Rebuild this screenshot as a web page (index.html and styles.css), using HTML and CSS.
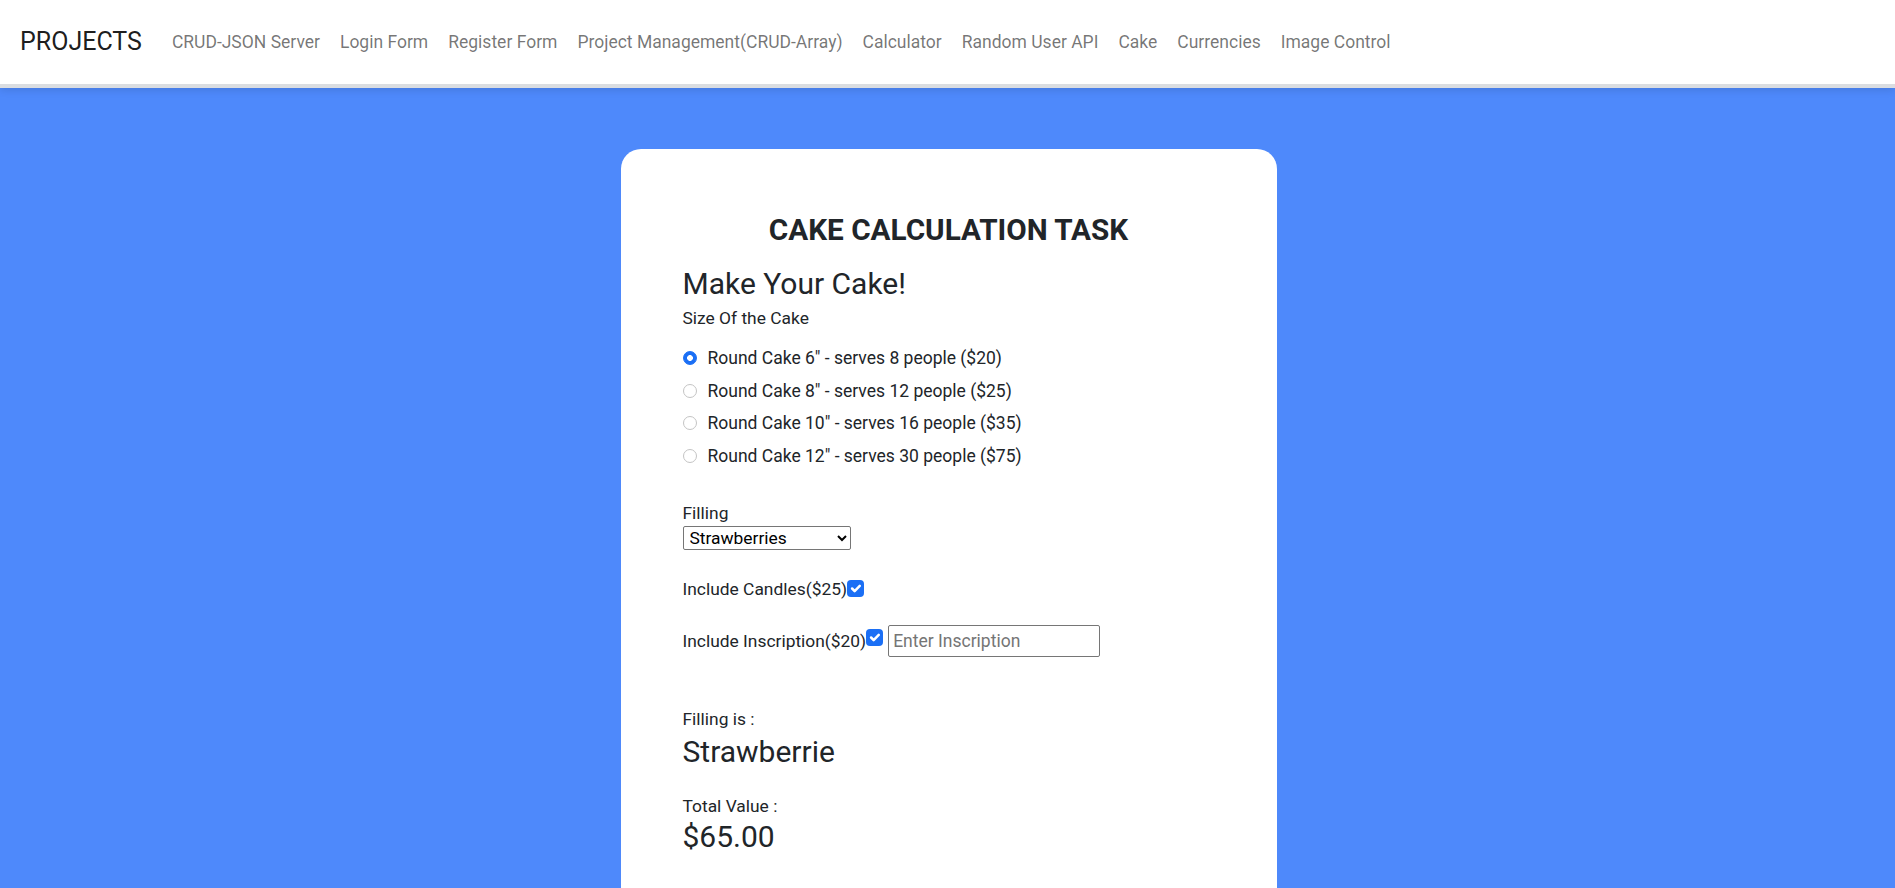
FILE: index.html
```html
<!DOCTYPE html>
<html lang="en">
<head>
<meta charset="utf-8">
<title>Cake Calculation Task</title>
<link rel="stylesheet" href="styles.css">
</head>
<body>
<nav class="navbar">
  <a class="brand" href="#">PROJECTS</a>
  <ul class="nav-links">
    <li><a href="#">CRUD-JSON Server</a></li>
    <li><a href="#">Login Form</a></li>
    <li><a href="#">Register Form</a></li>
    <li><a href="#">Project Management(CRUD-Array)</a></li>
    <li><a href="#">Calculator</a></li>
    <li><a href="#">Random User API</a></li>
    <li><a href="#">Cake</a></li>
    <li><a href="#">Currencies</a></li>
    <li><a href="#">Image Control</a></li>
  </ul>
</nav>
<main class="page">
  <section class="card">
    <h1 class="title">CAKE CALCULATION TASK</h1>
    <h2 class="subtitle">Make Your Cake!</h2>
    <p class="label size-label">Size Of the Cake</p>
    <div class="radio-list">
      <label class="radio-row"><input type="radio" name="size" class="radio" checked><span>Round Cake 6" - serves 8 people ($20)</span></label>
      <label class="radio-row"><input type="radio" name="size" class="radio"><span>Round Cake 8" - serves 12 people ($25)</span></label>
      <label class="radio-row"><input type="radio" name="size" class="radio"><span>Round Cake 10" - serves 16 people ($35)</span></label>
      <label class="radio-row"><input type="radio" name="size" class="radio"><span>Round Cake 12" - serves 30 people ($75)</span></label>
    </div>
    <div class="filling">
      <label class="label" for="filling">Filling</label>
      <select id="filling" class="select">
        <option>Strawberries</option>
        <option>Chocolate</option>
        <option>Vanilla</option>
      </select>
    </div>
    <div class="check-row candles">
      <label class="label" for="candles">Include Candles($25)</label><input id="candles" type="checkbox" class="check" checked>
    </div>
    <div class="check-row inscription">
      <label class="label" for="insc">Include Inscription($20)</label><input id="insc" type="checkbox" class="check check-top" checked><input type="text" class="text-input" placeholder="Enter Inscription">
    </div>
    <div class="result">
      <p class="label">Filling is :</p>
      <p class="value">Strawberrie</p>
    </div>
    <div class="result total">
      <p class="label">Total Value :</p>
      <p class="value">$65.00</p>
    </div>
  </section>
</main>
</body>
</html>
```

FILE: styles.css
```css
* { box-sizing: border-box; }

html, body {
  margin: 0;
  padding: 0;
}

body {
  font-family: Roboto, "Liberation Sans", Arial, sans-serif;
  font-size: 17.4px;
  line-height: 24px;
  color: #212529;
  background: #4e89fb;
  overflow: hidden;
  height: 888px;
}

.navbar {
  height: 88px;
  background: #fff;
  border-bottom: 4px solid #dadde1;
  box-shadow: 0 2px 8px rgba(0, 0, 0, 0.12);
  display: flex;
  align-items: center;
  padding: 0 0 0 20px;
  position: relative;
  z-index: 2;
}

.brand {
  font-size: 25px;
  line-height: 30px;
  color: rgba(0, 0, 0, 0.9);
  text-decoration: none;
  margin-right: 30px;
}

.nav-links {
  list-style: none;
  display: flex;
  gap: 20px;
  margin: 0;
  padding: 0;
}

.nav-links a {
  color: rgba(0, 0, 0, 0.55);
  text-decoration: none;
  font-size: 17.5px;
}

.page {
  display: flex;
  justify-content: center;
  padding-top: 61px;
}

.card {
  width: 656px;
  background: #fff;
  border-radius: 20px;
  padding: 64px 62px 80px;
  margin-left: 2px;
}

.title {
  margin: 0;
  text-align: center;
  font-size: 29.7px;
  font-weight: 700;
  line-height: 33.6px;
}

.subtitle {
  margin: 20px 0 0;
  font-size: 30px;
  font-weight: 400;
  line-height: 33.6px;
}

.label {
  display: block;
  margin: 0;
  font-size: 17.4px;
  line-height: 24px;
}

.size-label { margin-top: 6px; }

.radio-list {
  display: flex;
  flex-direction: column;
  gap: 8.6px;
  margin-top: 16px;
}

.radio-row {
  display: flex;
  align-items: center;
  height: 24px;
  font-size: 17.5px;
}

.radio {
  appearance: none;
  -webkit-appearance: none;
  width: 14px;
  height: 14px;
  margin: 0 11px 0 0;
  border: 1px solid #c4c4c4;
  border-radius: 50%;
  background: #fff;
  flex: none;
}

.radio:checked {
  border-color: #1b6ff5;
  background: radial-gradient(circle, #fff 0 2.6px, #1b6ff5 3.2px);
}

.filling {
  margin-top: 33px;
}

.select {
  display: block;
  width: 168px;
  height: 24px;
  font-family: Roboto, "Liberation Sans", Arial, sans-serif;
  font-size: 17.4px;
  color: #000;
  border: 1px solid #767676;
  border-radius: 2px;
  background: #fff;
  margin-top: 1px;
  padding: 0 2px;
}

.check-row {
  display: flex;
  align-items: center;
}

.candles { margin-top: 27px; }

.inscription { margin-top: 24px; height: 32px; }

.check {
  appearance: none;
  -webkit-appearance: none;
  width: 17px;
  height: 17px;
  margin: 0;
  border-radius: 4px;
  background-color: #1b6ff5;
  background-image: url("data:image/svg+xml,%3csvg xmlns='http://www.w3.org/2000/svg' viewBox='0 0 20 20'%3e%3cpath fill='none' stroke='%23fff' stroke-linecap='round' stroke-linejoin='round' stroke-width='3' d='M6 10l3 3l6-6'/%3e%3c/svg%3e");
  background-size: 100% 100%;
  flex: none;
}

.check-top {
  align-self: flex-start;
  margin-top: 4px;
}

.text-input {
  width: 212px;
  height: 32px;
  margin-left: 5px;
  border: 1px solid #767676;
  border-radius: 2px;
  font-family: Roboto, "Liberation Sans", Arial, sans-serif;
  font-size: 17.5px;
  padding: 1px 4px;
}

.text-input::placeholder { color: #757575; }

.result { margin-top: 50px; }

.result.total { margin-top: 25px; }

.value {
  margin: 4px 0 0;
  font-size: 30px;
  line-height: 33.6px;
}

.total .value { margin-top: 2px; }
```
